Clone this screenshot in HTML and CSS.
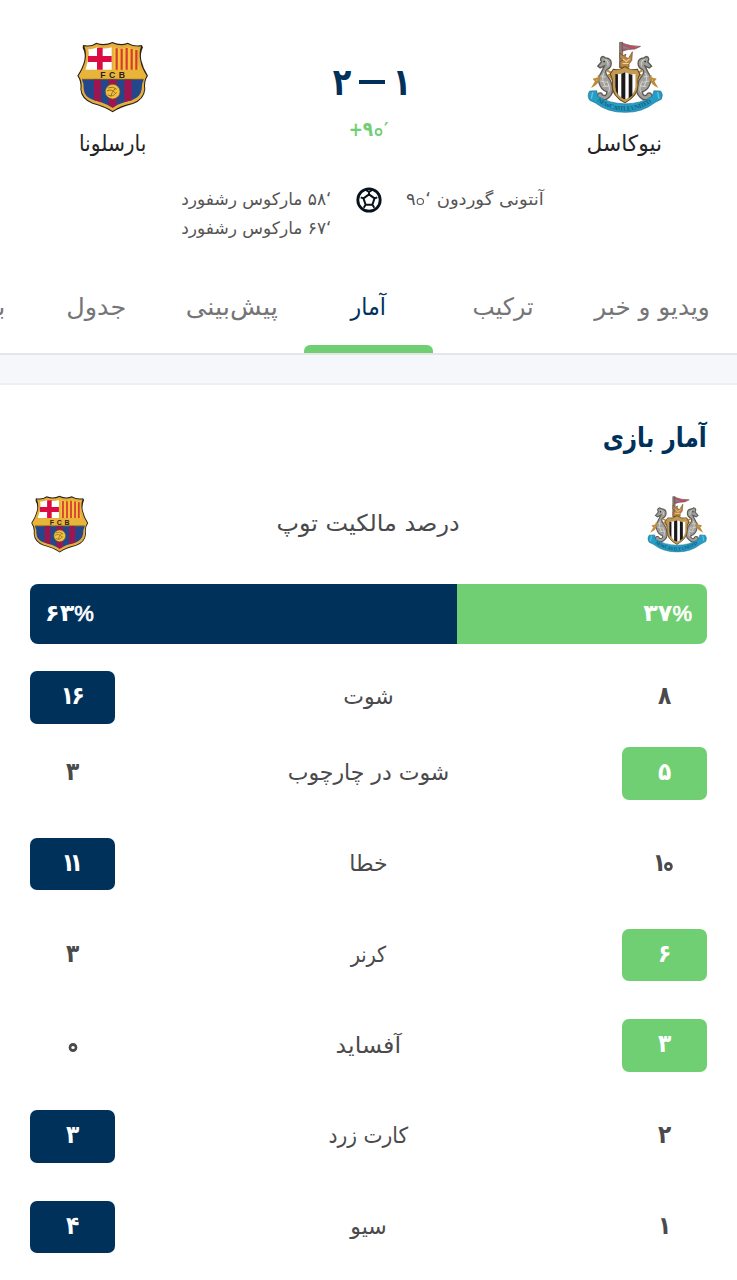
FILE: index.html
```html
<!DOCTYPE html>
<html lang="fa" dir="rtl">
<head>
<meta charset="utf-8">
<title>نیوکاسل - بارسلونا</title>
<link rel="stylesheet" href="styles.css">
</head>
<body>
<svg class="defs" width="0" height="0" aria-hidden="true">
  <symbol id="barcelona" viewBox="50 36 216 216">
    <path d="M68 48Q93 53 108 41Q132 50 156 39Q181 50 202 41Q222 53 244 48L248 55Q239 73 243 94Q248 117 263 140Q251 157 255 181Q252 213 218 225Q179 235 157 250Q134 234 96 224Q62 211 60 180Q63 158 51 140Q67 116 72 94Q76 73 67 57Z" fill="#2b2119"/>
    <path d="M72 52Q93 55 109 45Q132 54 156 43Q181 54 202 45Q221 55 242 52Q235 73 240 95Q244 118 259 140Q248 158 252 181Q249 210 217 222Q179 230 157 246Q134 231 97 221Q65 208 63 180Q67 158 55 140Q70 116 75 95Q80 73 72 52Z" fill="#e6ae3d"/>
    <path d="M84 60Q98 62 111 55Q130 62 154 55V122H75Q83 98 85 84Q86 70 84 60Z" fill="#fff"/>
    <path d="M110 56H127V81H154V99H127V122H110V99H83V81H110Z" fill="#da0c43"/>
    <path d="M160 55Q183 61 202 55Q217 63 231 61Q227 80 232 101L239 122H160Z" fill="#f4c338"/>
    <path d="M169 58V122M184 59V122M199 57V122M214 60V122M228 63V122" stroke="#d43b34" stroke-width="6.5"/>
    <path d="M68 124H247L257 140L251 151H63L55 140Z" fill="#e9b43a"/>
    <path d="M65 152H250Q244 163 244 181Q241 204 214 214Q178 222 157 236Q135 222 99 213Q72 204 70 180Q71 163 65 152Z" fill="#24478c"/>
    <path d="M101 152H122V220L101 214ZM145 152H169V229L157 236L145 229ZM192 152H214V214L192 219Z" fill="#9e164f"/>
    <path d="M65 151H250" stroke="#302820" stroke-width="2"/>
    <text class="crest-letters" x="157" y="148" text-anchor="middle" textLength="74">FCB</text>
    <circle cx="157" cy="188" r="22" fill="#f1c33c" stroke="#76532d" stroke-width="2"/>
    <path d="M143 177Q158 170 169 181M140 186Q155 178 165 193M142 197Q157 207 169 190M151 203Q154 189 166 177" fill="none" stroke="#956e2b" stroke-width="3"/>
  </symbol>
  <symbol id="newcastle" viewBox="50 30 226 218">
    <path d="M147 36H156V112H147Z" fill="#8b8175" stroke="#4f4640" stroke-width="2"/>
    <path d="M154 38Q178 48 209 48L192 56Q174 55 155 62Z" fill="#b9535a" stroke="#704552" stroke-width="2"/>
    <path d="M157 46L179 54L157 55Z" fill="#78859b"/>
    <path d="M148 67L156 76L166 71L163 80L173 84L185 64L183 90L175 100V110H148V94L157 89L147 82Z" fill="#bd8645" stroke="#6a4b28" stroke-width="2"/>
    <path d="M156 85L167 93L177 84M156 99H174" stroke="#efd391" stroke-width="3" fill="none"/>
    <g id="seahorse">
      <path d="M93 94Q86 81 98 78L105 82Q122 83 122 98Q122 112 109 117Q103 122 108 132Q122 149 125 166Q130 187 116 199Q103 213 85 203Q76 195 85 187Q94 184 97 193Q109 197 109 183Q91 177 86 157Q81 143 90 130Q96 118 102 106L89 112L82 107Z" fill="#a09f9b" stroke="#5c5953" stroke-width="4"/>
      <path d="M103 87Q115 91 112 105M100 127Q91 144 105 168M109 151Q121 170 114 184M91 136L105 139M90 151L108 155M98 167L117 166" fill="none" stroke="#d4d3cb" stroke-width="3"/>
      <circle cx="101" cy="93" r="2.5" fill="#292522"/>
      <path d="M85 134Q86 155 70 164L77 152L72 146L84 143M109 119L127 129L115 133L128 149" fill="none" stroke="#bd8b39" stroke-width="6"/>
    </g>
    <use href="#seahorse" transform="translate(324 0) scale(-1 1)"/>
    <path d="M128 116Q145 121 163 108Q180 121 200 116L207 131Q199 143 202 163Q202 194 163 216Q124 195 125 164Q128 145 119 130Z" fill="#c49a51" stroke="#614724" stroke-width="3"/>
    <path d="M134 130Q149 133 163 124Q179 134 194 130V169Q191 192 163 207Q135 191 134 168Z" fill="#fff"/>
    <path d="M134 130L142 131V192Q134 181 134 168ZM152 129L164 124V207L152 201ZM174 129L185 132V194L174 202Z" fill="#1d191a"/>
    <path d="M58 181L79 180L82 196Q116 218 163 219Q210 219 244 196L249 180L269 181Q278 191 271 205L252 215Q214 245 164 244Q112 245 75 216L58 208Q49 194 58 181Z" fill="#249dc7" stroke="#28718c" stroke-width="2"/>
    <path d="M67 184L63 203M260 184L264 203" stroke="#5ec6df" stroke-width="4"/>
    <path id="ribbon" d="M80 211Q119 240 163 239Q207 239 247 211" fill="none"/>
    <text class="ribbon-text" direction="ltr"><textPath href="#ribbon" textLength="174">NEWCASTLE UNITED</textPath></text>
  </symbol>
</svg>

<header class="match">
  <div class="teams">
    <div class="team">
      <svg class="crest crest-wide"><use href="#newcastle"/></svg>
      <span class="team-name">نیوکاسل</span>
    </div>
    <div class="result">
      <div class="score" dir="ltr"><span>۲</span><i class="dash"></i><span>۱</span></div>
      <div class="clock" dir="ltr">+۹<span class="zero">۰</span>′</div>
    </div>
    <div class="team">
      <svg class="crest"><use href="#barcelona"/></svg>
      <span class="team-name narrow">بارسلونا</span>
    </div>
  </div>
  <div class="goals">
    <div class="scorers home"><span>آنتونی گوردون <bdi dir="ltr">۹<span class="zero">۰</span>‘</bdi></span></div>
    <svg class="ball" viewBox="0 0 26 26">
      <circle cx="13" cy="13" r="11.2"/>
      <path d="M13 7.4L18.5 11.4L16.4 17.8H9.6L7.5 11.4ZM13 7.4V5M18.5 11.4L21.3 10.4M16.4 17.8L18.3 20.8M9.6 17.8L7.7 20.8M7.5 11.4L4.7 10.4M9.8 3L13 5L16.2 3"/>
    </svg>
    <div class="scorers away">
      <span><bdi dir="ltr">۵۸‘</bdi> مارکوس رشفورد</span>
      <span><bdi dir="ltr">۶۷‘</bdi> مارکوس رشفورد</span>
    </div>
  </div>
</header>

<nav class="tabs">
  <a class="tab t-video"><span>ویدیو و خبر</span></a>
  <a class="tab t-lineup"><span>ترکیب</span></a>
  <a class="tab t-stats active"><span>آمار</span></a>
  <a class="tab t-predict"><span>پیش‌بینی</span></a>
  <a class="tab t-table"><span>جدول</span></a>
  <a class="tab t-more"><span>بازی</span></a>
</nav>
<div class="band"></div>

<main class="stats">
  <h2 class="title"><span>آمار بازی</span></h2>
  <div class="possession-head">
    <svg class="crest-small crest-small-wide"><use href="#newcastle"/></svg>
    <span class="label possession-label">درصد مالکیت توپ</span>
    <svg class="crest-small"><use href="#barcelona"/></svg>
  </div>
  <div class="possession">
    <div class="share green" style="width:37%"><span dir="ltr">۳۷<i>%</i></span></div>
    <div class="share navy" style="width:63%"><span dir="ltr">۶۳<i>%</i></span></div>
  </div>
  <div class="rows">
    <div class="row tight"><b class="value"><span>۸</span></b><span class="label">شوت</span><b class="value navy"><span><i class="six-one">۱</i>۶</span></b></div>
    <div class="row"><b class="value green"><span>۵</span></b><span class="label">شوت در چارچوب</span><b class="value"><span>۳</span></b></div>
    <div class="row"><b class="value"><span><i class="one">۱</i><i class="zero">۰</i></span></b><span class="label">خطا</span><b class="value navy"><span><i class="one">۱</i><i class="one">۱</i></span></b></div>
    <div class="row"><b class="value green"><span>۶</span></b><span class="label corners">کرنر</span><b class="value"><span>۳</span></b></div>
    <div class="row"><b class="value green"><span>۳</span></b><span class="label offsides">آفساید</span><b class="value"><span><i class="zero">۰</i></span></b></div>
    <div class="row"><b class="value"><span>۲</span></b><span class="label cards">کارت زرد</span><b class="value navy"><span>۳</span></b></div>
    <div class="row"><b class="value"><span>۱</span></b><span class="label">سیو</span><b class="value navy"><span>۴</span></b></div>
  </div>
</main>
</body>
</html>
```
FILE: styles.css
```css
* { box-sizing: border-box; }
body {
  margin: 0;
  width: 737px;
  height: 1280px;
  overflow: hidden;
  background: #fff;
  color: #4a4a4c;
  font-family: "DejaVu Sans", sans-serif;
}
i { font-style: normal; }
.defs { display: block; }
.crest-letters { font: bold 26px "Liberation Sans", sans-serif; fill: #292017; direction: ltr; }
.ribbon-text { font: bold 19px "Liberation Serif", serif; fill: #17627e; }

/* Open ring shape for the Persian zero */
.zero {
  display: inline-block;
  overflow: hidden;
  width: 7px;
  height: 7px;
  margin: 0 1px;
  border: 1.3px solid currentColor;
  border-radius: 50%;
  font-size: 4px;
  line-height: 4px;
  text-align: center;
  -webkit-text-fill-color: transparent;
}

.match { height: 275px; padding-top: 40px; }
.teams { display: flex; justify-content: space-between; padding: 0 55px; height: 142px; }
.team { width: 115px; display: flex; flex-direction: column; align-items: center; }
.crest { width: 72px; height: 72px; margin-top: 1px; }
.crest-wide { width: 76px; height: 74px; margin-top: 0; }
.team-name { height: 30px; margin-top: 15px; line-height: 30px; font-size: 22px; color: #242426; white-space: nowrap; transform: scaleX(.99); }
.crest:not(.crest-wide) + .team-name { margin-top: 16px; }
.team-name.narrow { transform: scaleX(.92); }
.result { width: 160px; display: flex; flex-direction: column; align-items: center; }
.score { display: flex; align-items: center; justify-content: center; gap: 6px; height: 48px; margin-top: 18px; padding-left: 6px; font-size: 38px; font-weight: bold; line-height: 48px; color: #00315b; }
.score span { display: flex; justify-content: center; width: 22px; transform: scaleX(.8); }
.dash { width: 26px; height: 4px; background: #00315b; }
.clock { height: 24px; line-height: 24px; margin-top: 11px; font-size: 20px; font-weight: bold; color: #70cf72; transform: scaleX(.84); }
.clock .zero { width: 9px; height: 8px; border-width: 2px; margin: 0 2px; }
.goals { display: grid; grid-template-columns: 1fr 26px 1fr; column-gap: 24px; }
.scorers { display: flex; flex-direction: column; font-size: 17px; line-height: 29px; color: #555; white-space: nowrap; padding-top: 3px; }
.home { align-items: flex-end; }
.home > span { transform: scaleX(1.06); transform-origin: left; }
.away { align-items: flex-start; }
.ball { width: 26px; height: 26px; margin-top: 5px; fill: none; stroke: #08111c; stroke-width: 2.8; }
.ball path { stroke-width: 2; stroke-linejoin: round; }

.tabs { display: flex; height: 80px; border-bottom: 2px solid #e3e5e8; overflow: hidden; }
.tab { flex: none; display: flex; flex-direction: column; align-items: center; justify-content: space-between; height: 78px; padding-top: 16px; font-size: 24px; line-height: 32px; color: #757577; white-space: nowrap; }
.t-video { width: 163px; padding-right: 7px; }
.t-video span { transform: scaleX(1.03); }
.t-lineup { width: 141px; }
.t-lineup span { transform: scaleX(.98); }
.t-stats { width: 129px; }
.t-stats span { transform: scaleX(.92); }
.t-predict { width: 144px; }
.t-predict span { transform: scaleX(1.075); }
.t-table { width: 127px; }
.t-table span { transform: scaleX(1.065); }
.t-more { width: 100px; }
.active { color: #00315b; }
.active::after { content: ""; width: 100%; height: 8px; border-radius: 6px 6px 0 0; background: #70cf72; }
.band { height: 30px; background: #f5f7fa; border-bottom: 2px solid #eceef0; }

.stats { padding: 0 30px; }
.title { margin: 0; height: 109px; padding-top: 33px; font-size: 27px; line-height: 40px; color: #00315b; }
.title span { display: inline-block; transform: scaleX(.855); transform-origin: right; }
.possession-head { display: flex; align-items: center; justify-content: space-between; height: 60px; }
.crest-small { width: 58px; height: 58px; margin-left: 1px; }
.crest-small-wide { width: 60px; height: 60px; margin-left: 0; }
.label { font-size: 22px; line-height: 34px; white-space: nowrap; }
.possession-label { font-size: 23px; margin-top: -2px; transform: scaleX(1.04); }
.corners { transform: scaleX(.87); }
.offsides { transform: scaleX(1.08); }
.cards { transform: scaleX(.92); }
.possession { display: flex; height: 60px; margin-top: 30px; border-radius: 8px; overflow: hidden; }
.share { display: flex; padding: 12px 15px; font-size: 24px; line-height: 34px; font-weight: bold; }
.share.navy { justify-content: flex-end; }
.share i { font: normal 22px "Liberation Sans", sans-serif; -webkit-text-stroke: .7px #fff; }
.green { background: #70cf72; color: #fff; }
.navy { background: #00315b; color: #fff; }
.rows { padding-top: 27px; }
.row { display: flex; align-items: center; justify-content: space-between; height: 52.5px; margin-bottom: 38.3px; }
.tight { margin-bottom: 23.5px; }
.value { display: flex; justify-content: center; width: 85px; height: 52.5px; border-radius: 7px; font-size: 25px; line-height: 50px; }
.value > span { direction: ltr; transform: scaleX(.87); }
.one { margin: 0 -3px; }
.six-one { margin-right: -3px; }
.value .zero { width: 10px; height: 9px; border-width: 3px; font-size: 3px; line-height: 3px; }
```
